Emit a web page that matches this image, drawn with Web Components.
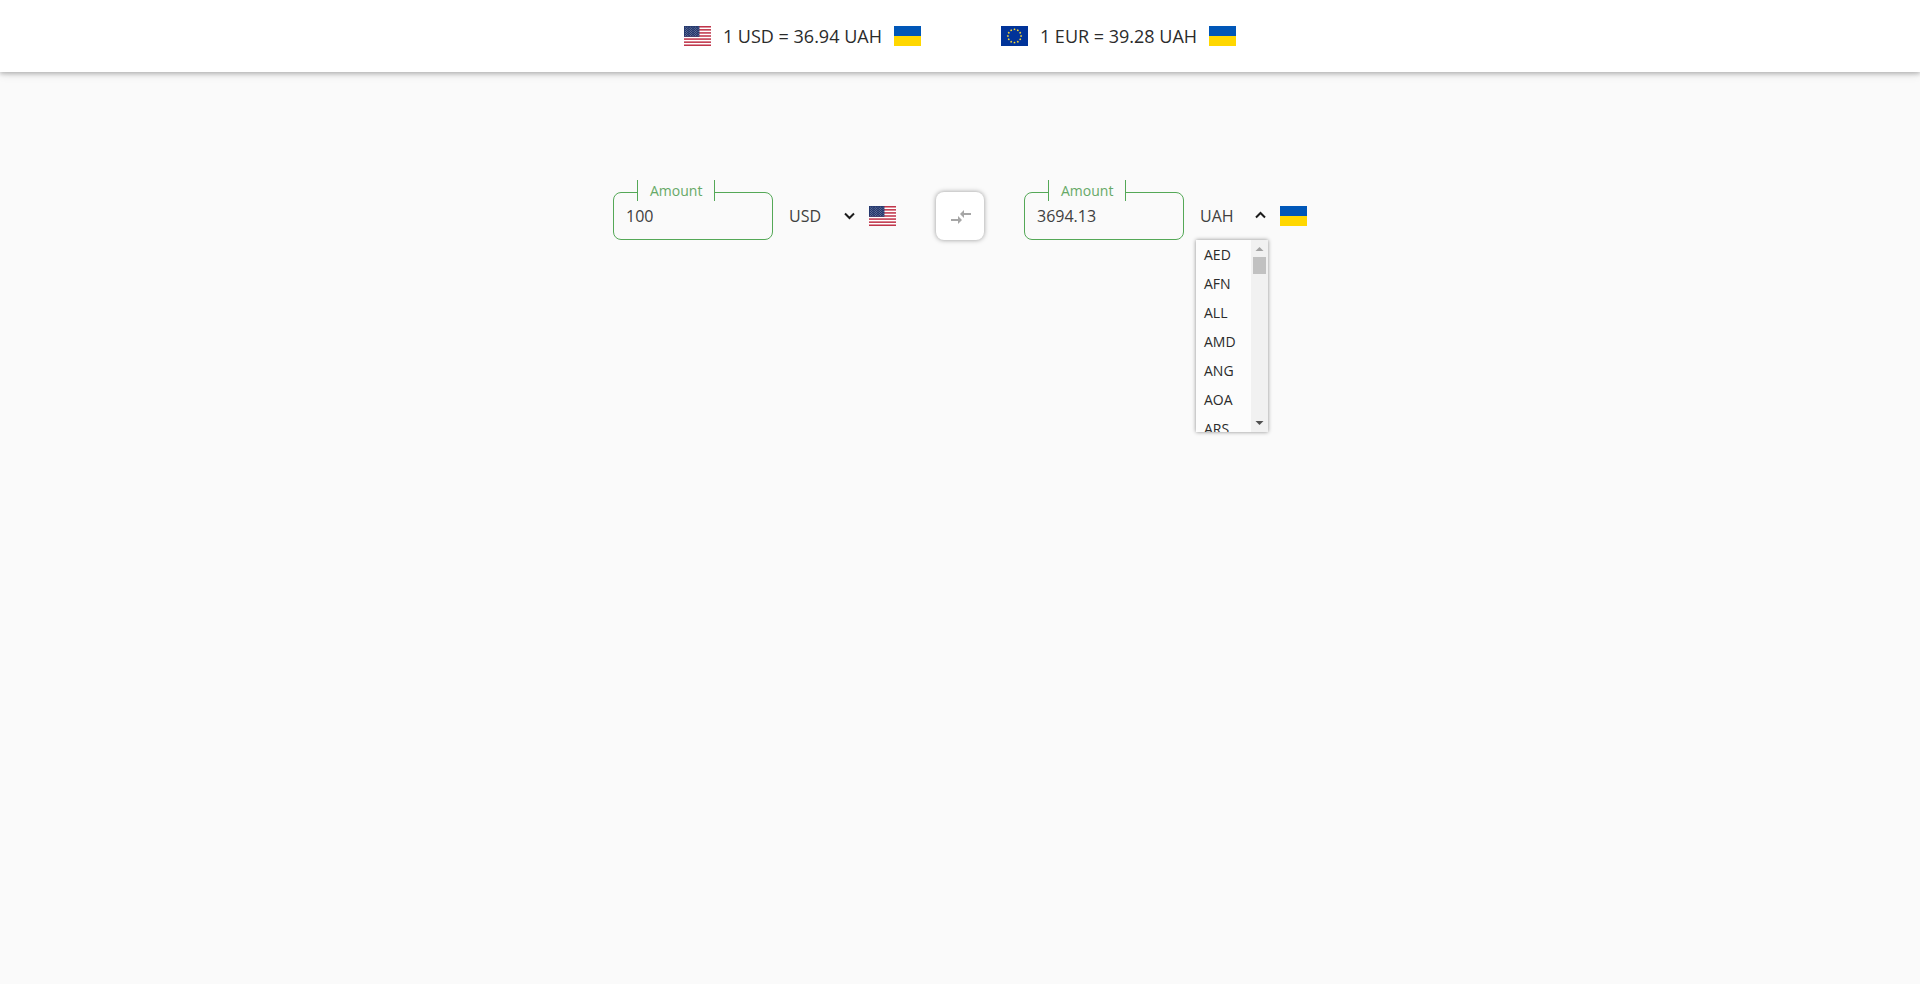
<!DOCTYPE html>
<html lang="en">
<head>
<meta charset="utf-8">
<meta name="viewport" content="width=device-width, initial-scale=1">
<title>Currency converter</title>
<style>
  body { margin: 0; min-height: 100vh; background: #fafafa; color: #2b2b2b; font-family: "Open Sans", "Noto Sans", sans-serif; font-size: 16px; }
</style>
</head>
<body>
<converter-app></converter-app>
<script>
const define = (name, html, setup) => {
  const template = document.createElement('template');
  template.innerHTML = html;
  customElements.define(name, class extends HTMLElement {
    connectedCallback() {
      if (this.shadowRoot) return;
      const root = this.attachShadow({ mode: 'open' });
      root.append(template.content.cloneNode(true));
      if (setup) setup(this, root);
    }
  });
};

const usFlag = () => {
  let out = '<rect width="27" height="20" fill="#fff"/>';
  for (let i = 0; i < 7; i++) out += `<rect y="${i * 40 / 13}" width="27" height="${20 / 13}" fill="#c0354a"/>`;
  out += '<rect width="15.4" height="10.77" fill="#24386e"/>';
  for (let r = 0; r < 9; r++)
    for (let c = 0; c < (r % 2 ? 5 : 6); c++)
      out += `<circle cx="${1.3 + c * 2.56 + (r % 2 ? 1.28 : 0)}" cy="${1.1 + r * 1.07}" r=".38" fill="#fff" opacity=".75"/>`;
  return out;
};
const euFlag = () => {
  let out = '<rect width="27" height="20" fill="#039"/>';
  for (let i = 0; i < 12; i++) {
    const a = i * Math.PI / 6, x = 13.5 + 6.6 * Math.sin(a), y = 10 - 6.6 * Math.cos(a);
    let d = '';
    for (let k = 0; k < 10; k++) {
      const b = k * Math.PI / 5, r = k % 2 ? .7 : 1.2;
      d += `${(x + r * Math.sin(b)).toFixed(2)},${(y - r * Math.cos(b)).toFixed(2)} `;
    }
    out += `<polygon points="${d}" fill="#fd3"/>`;
  }
  return out;
};
const flags = {
  USD: usFlag(),
  EUR: euFlag(),
  UAH: '<rect width="27" height="10" fill="#0057b8"/><rect y="10" width="27" height="10" fill="#ffd700"/>'
};

define('currency-flag', `
  <style>:host { display: block; flex: none; width: 27px; height: 20px } svg { display: block }</style>
  <svg width="27" height="20" viewBox="0 0 27 20" aria-hidden="true"></svg>`,
  (el, root) => { root.querySelector('svg').innerHTML = flags[el.getAttribute('code')]; });

define('exchange-rate', `
  <style>:host { display: flex; align-items: center; gap: 12px; font-size: 18px; line-height: 24px; white-space: nowrap }</style>
  <slot name="from"></slot><span><slot></slot></span><slot name="to"></slot>`);

define('rate-header', `
  <style>
    :host { display: block }
    header { display: flex; justify-content: center; align-items: center; gap: 80px; min-height: 72px; background: #fff; box-shadow: 0 2px 4px rgba(0,0,0,.2), 0 1px 10px rgba(0,0,0,.14) }
  </style>
  <header><slot></slot></header>`);

define('amount-field', `
  <style>
    :host { display: block; position: relative; width: 160px; flex: none }
    input { box-sizing: border-box; display: block; width: 100%; height: 48px; margin: 0; padding: 0 12px; border: 1px solid #54a857; border-radius: 8px; background: transparent; color: #404040; font: inherit; outline: none }
    label { position: absolute; left: 24px; top: -12px; padding: 0 12px; border: solid #54a857; border-width: 0 1px; background: #fafafa; color: #66a967; font-size: 14px; line-height: 21px }
  </style>
  <input id="amount" type="text" inputmode="decimal"><label for="amount">Amount</label>`,
  (el, root) => { root.querySelector('input').value = el.getAttribute('value'); });

define('currency-list', `
  <style>
    :host { display: flex; width: 72px; height: 192px; overflow: hidden; background: #fff; box-shadow: 0 0 4px rgba(0,0,0,.45) }
    ul { flex: 1; margin: 0; padding: 0; list-style: none; overflow: hidden; background: #fcfcfc }
    li { padding: 0 8px; font-size: 14px; line-height: 29px }
    .bar { display: flex; flex-direction: column; align-items: center; width: 17px; background: #f1f1f1 }
    .thumb { width: 13px; height: 17px; background: #c1c1c1 }
    .bar svg { display: block; flex: none }
    .bar svg:last-child { margin-top: auto }
  </style>
  <ul role="listbox" aria-label="Currency"></ul>
  <div class="bar" aria-hidden="true">
    <svg width="17" height="17"><path d="M4.500 11h8L8.500 7z" fill="#a3a3a3"/></svg>
    <div class="thumb"></div>
    <svg width="17" height="17"><path d="M4.500 6h8L8.500 10z" fill="#505050"/></svg>
  </div>`,
  (el, root) => {
    const ul = root.querySelector('ul');
    for (const code of ['AED', 'AFN', 'ALL', 'AMD', 'ANG', 'AOA', 'ARS']) {
      const li = document.createElement('li');
      li.setAttribute('role', 'option');
      li.textContent = code;
      ul.append(li);
    }
  });

define('currency-select', `
  <style>
    :host { display: block; position: relative; width: 72px; flex: none }
    select { appearance: none; width: 100%; height: 48px; margin: 0; padding: 0 4px; border: 0; background: transparent; color: #404040; font: inherit; outline: none }
    .chevron { position: absolute; right: 2px; top: 20px; pointer-events: none }
    :host([open]) .chevron { top: 19px; transform: rotate(180deg) }
    currency-list { display: none; position: absolute; left: 0; top: 100%; z-index: 1 }
    :host([open]) currency-list { display: flex }
  </style>
  <select aria-label="Currency"><option></option></select>
  <svg class="chevron" width="11" height="8" viewBox="0 0 11 8" aria-hidden="true"><path d="M1 1.500 5.500 6 10 1.500" fill="none" stroke="#1c1c1c" stroke-width="2"/></svg>
  <currency-list></currency-list>`,
  (el, root) => { root.querySelector('option').textContent = el.getAttribute('value'); });

define('money-input', `
  <style>:host { display: flex; align-items: center; gap: 12px }</style>
  <slot></slot>`);

define('swap-button', `
  <style>
    :host { display: block; flex: none }
    button { display: grid; place-items: center; width: 48px; height: 48px; padding: 0; border: 0; border-radius: 8px; background: #fff; box-shadow: 0 0 5px rgba(0,0,0,.4) }
  </style>
  <button type="button" aria-label="Swap currencies">
    <svg width="24" height="24" viewBox="-1 -1 24 24" fill="#a6a6a6" aria-hidden="true"><path d="M9.010 14H2v2h7.010v3L13 15l-3.990-4zm5.980-1v-3H22V8h-7.010V5L11 9z"/></svg>
  </button>`);

define('converter-app', `
  <style>
    :host { display: block }
    main { display: flex; justify-content: center; align-items: center; gap: 40px; padding: 120px 16px }
  </style>
  <rate-header>
    <exchange-rate><currency-flag slot="from" code="USD"></currency-flag>1 USD = 36.94 UAH<currency-flag slot="to" code="UAH"></currency-flag></exchange-rate>
    <exchange-rate><currency-flag slot="from" code="EUR"></currency-flag>1 EUR = 39.28 UAH<currency-flag slot="to" code="UAH"></currency-flag></exchange-rate>
  </rate-header>
  <main>
    <money-input>
      <amount-field value="100"></amount-field>
      <currency-select value="USD"></currency-select>
      <currency-flag code="USD"></currency-flag>
    </money-input>
    <swap-button></swap-button>
    <money-input>
      <amount-field value="3694.13"></amount-field>
      <currency-select value="UAH" open></currency-select>
      <currency-flag code="UAH"></currency-flag>
    </money-input>
  </main>`);
</script>
</body>
</html>
